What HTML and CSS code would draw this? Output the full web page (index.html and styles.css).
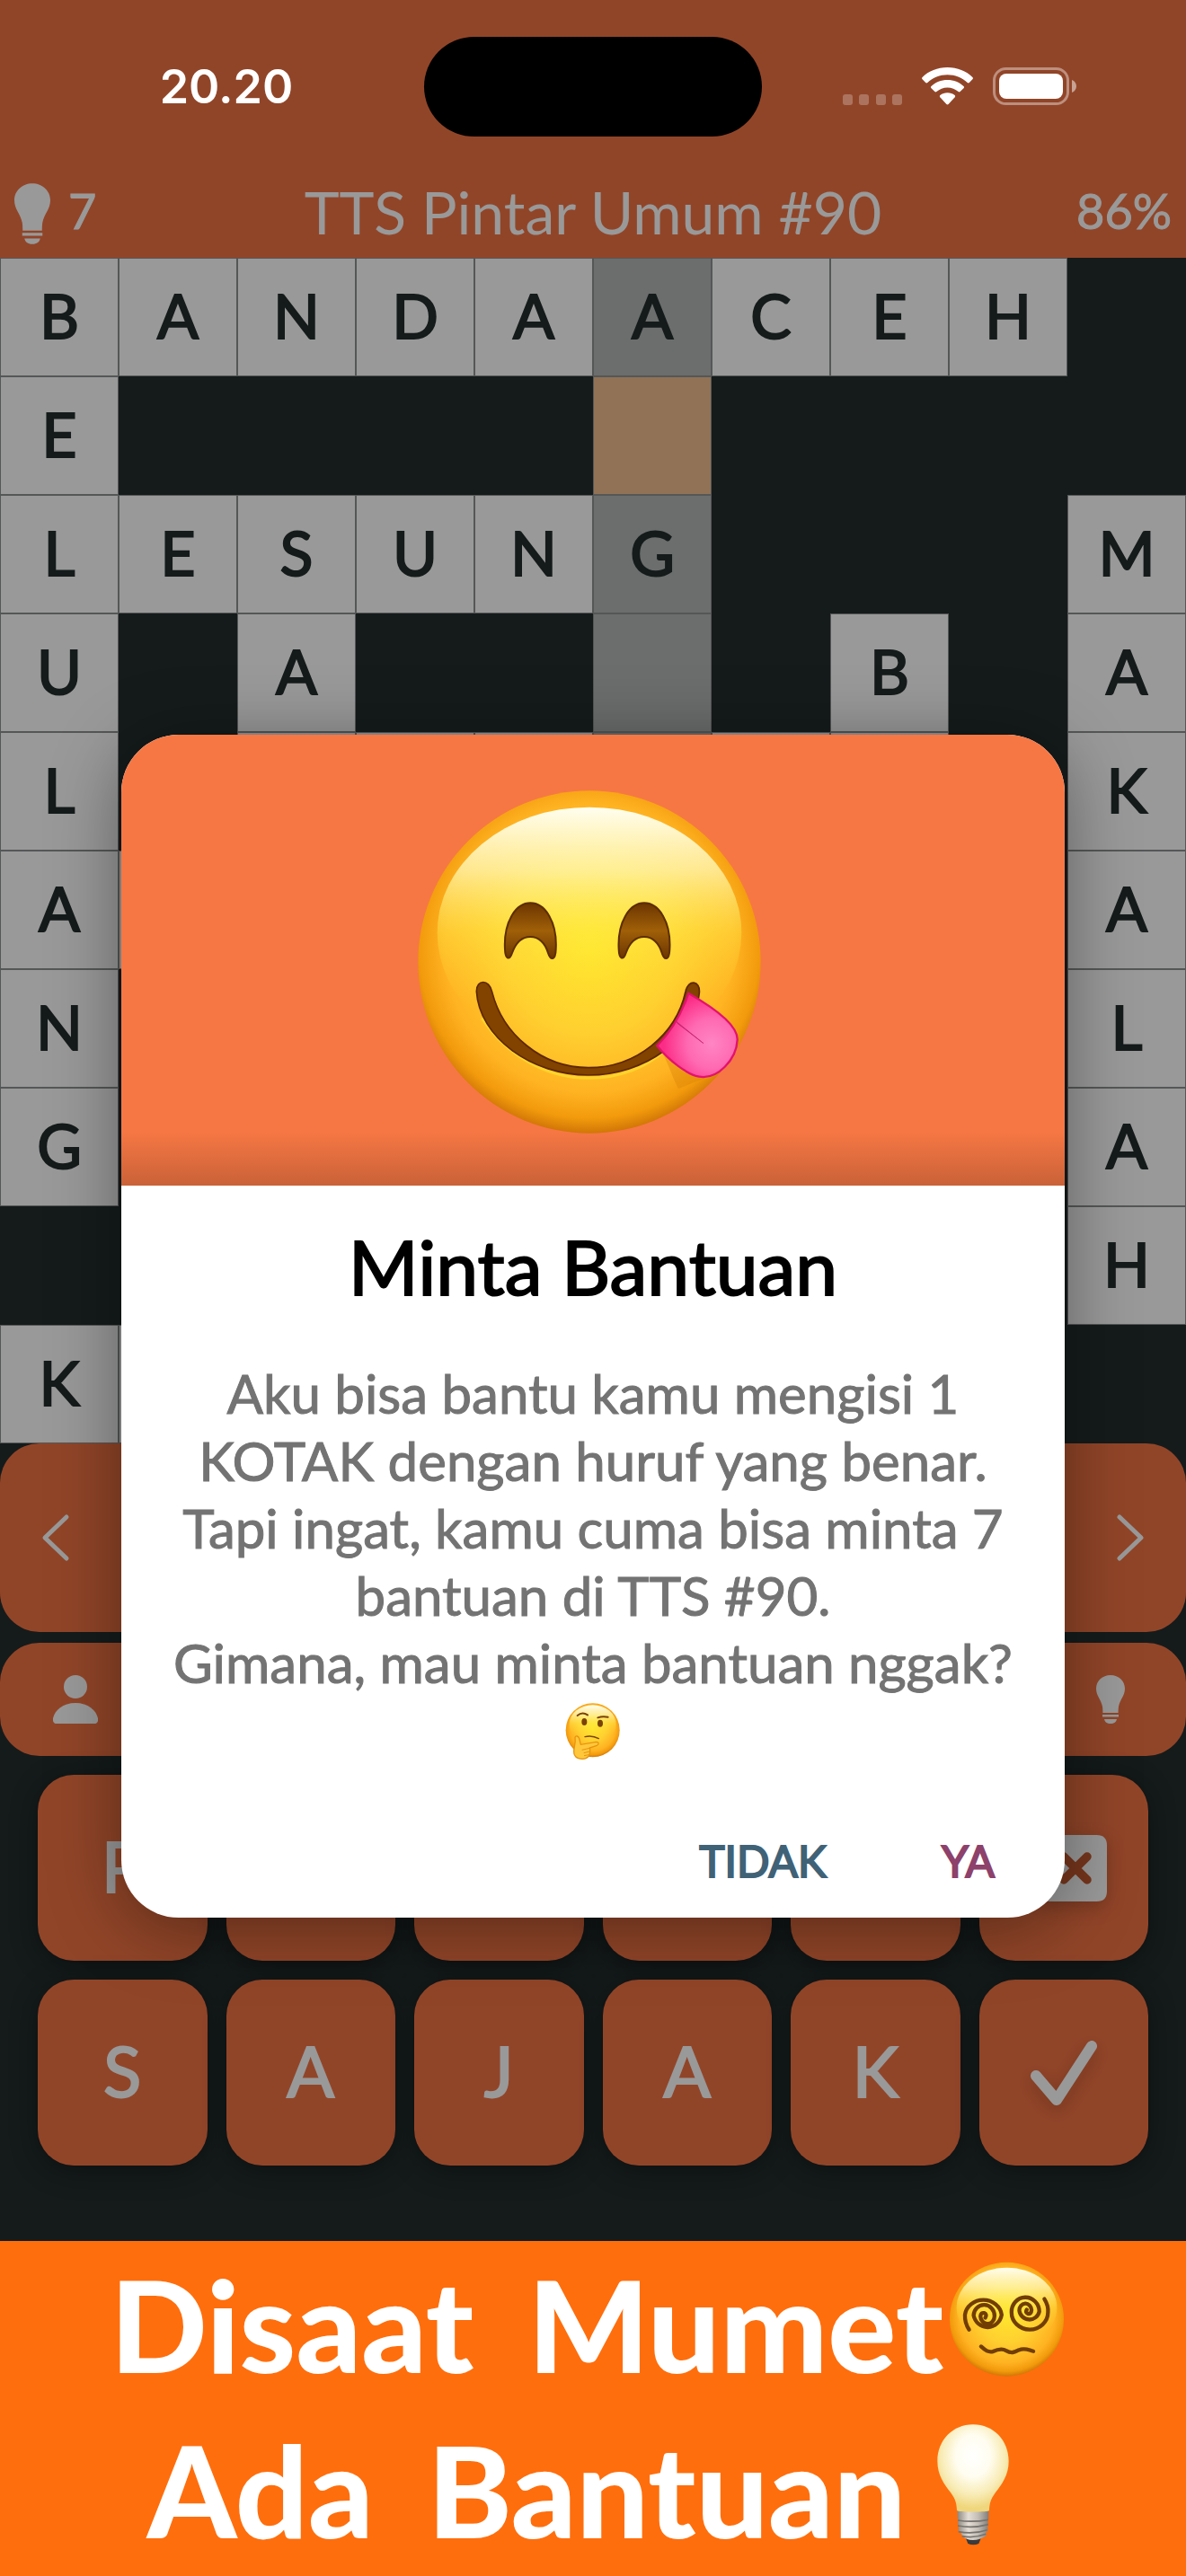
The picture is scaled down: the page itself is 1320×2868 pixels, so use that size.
FILE: index.html
```html
<!DOCTYPE html>
<html lang="id">
<head>
  <meta charset="UTF-8">
  <meta name="viewport" content="width=device-width, initial-scale=1.0">
  <title>TTS Pintar Umum #90</title>
  <link rel="stylesheet" href="styles.css">
</head>
<body>
  <svg class="defs" aria-hidden="true">
    <defs>
      <symbol id="bulb" viewBox="0 0 32 54">
        <path d="M16 0C7 0 0 6.500 0 15c0 8 5.500 12 7 20 .4 2.500.4 7 .4 7h17.200s0-4.500.4-7c1.500-8 7-12 7-20C32 6.500 25 0 16 0z"/>
        <path d="M7 44h18v2.500H7zM9 49h14c-.5 3-3 5-7 5s-6.500-2-7-5z"/>
      </symbol>
      <radialGradient id="face" cx=".5" cy=".46" r=".54">
        <stop offset="0" stop-color="#ffe52c"/>
        <stop offset=".45" stop-color="#ffd030"/>
        <stop offset=".78" stop-color="#ffb322"/>
        <stop offset=".92" stop-color="#f29a0c"/>
        <stop offset="1" stop-color="#d17606"/>
      </radialGradient>
      <linearGradient id="shine" x1="0" y1="0" x2="0" y2="1">
        <stop offset="0" stop-color="#fffef0"/>
        <stop offset=".25" stop-color="#fff9b4" stop-opacity=".75"/>
        <stop offset=".5" stop-color="#fff550" stop-opacity=".35"/>
        <stop offset=".8" stop-color="#ffdc30" stop-opacity="0"/>
      </linearGradient>
      <linearGradient id="eye" x1="0" y1="0" x2="0" y2="1">
        <stop offset="0" stop-color="#6b3500"/>
        <stop offset=".5" stop-color="#a06008"/>
        <stop offset="1" stop-color="#6b3500"/>
      </linearGradient>
      <radialGradient id="tongue" cx=".68" cy=".6" r=".6">
        <stop offset="0" stop-color="#ff85c4"/>
        <stop offset=".5" stop-color="#ff6ab2"/>
        <stop offset="1" stop-color="#fb2c86"/>
      </radialGradient>
      <radialGradient id="glow" cx=".5" cy=".36" r=".6">
        <stop offset="0" stop-color="#fff"/>
        <stop offset=".4" stop-color="#fffdf0"/>
        <stop offset=".75" stop-color="#f8ebb4"/>
        <stop offset="1" stop-color="#efd67c"/>
      </radialGradient>
      <linearGradient id="metal">
        <stop offset="0" stop-color="#8d8880"/>
        <stop offset=".35" stop-color="#e4ded6"/>
        <stop offset=".65" stop-color="#c4beb6"/>
        <stop offset="1" stop-color="#837e78"/>
      </linearGradient>
    </defs>
  </svg>

  <div class="app">
    <header class="header">
      <div class="status-bar">
        <span class="clock">20.20</span>
        <div class="island"></div>
        <div class="status-icons">
          <svg width="66" height="12" viewBox="0 0 66 12" fill="#fff" opacity=".25">
            <rect width="11" height="12" rx="3"/><rect x="18" width="11" height="12" rx="3"/>
            <rect x="37" width="11" height="12" rx="3"/><rect x="55" width="11" height="12" rx="3"/>
          </svg>
          <svg width="57" height="42" viewBox="0 0 57 42" fill="#fff">
            <path d="M28.500 0C17.500 0 7.500 4 .6 11c-.7.7-.7 1.600 0 2.300l3.600 3.700c.6.6 1.500.6 2.100 0 6-5.600 13.700-8.700 22.200-8.700s16.200 3.100 22.200 8.700c.6.6 1.500.6 2.100 0l3.600-3.700c.7-.7.7-1.600 0-2.300C49.500 4 39.500 0 28.500 0z"/>
            <path d="M28.500 14c-7 0-13.300 2.600-18 7-.7.600-.7 1.500 0 2.200l3.900 3.900c.6.600 1.400.6 2 0 3.300-2.900 7.500-4.600 12.100-4.600s8.800 1.700 12.100 4.600c.6.600 1.400.6 2 0l3.900-3.900c.7-.7.700-1.600 0-2.200-4.700-4.400-11-7-18-7z"/>
            <path d="M28.500 28.200c-3.100 0-5.900 1-8.100 2.800-.7.600-.7 1.500-.1 2.200l7.100 7.900c.6.600 1.600.6 2.200 0l7.100-7.900c.6-.7.600-1.600-.1-2.200-2.200-1.800-5-2.800-8.100-2.800z"/>
          </svg>
          <svg width="94" height="42" viewBox="0 0 94 42">
            <rect x="1.500" y="1.500" width="82" height="39" rx="13" fill="none" stroke="#fff" stroke-width="3" opacity=".4"/>
            <rect x="7" y="7" width="71" height="28" rx="8" fill="#fff"/>
            <path d="M88 14c3 1 5 4 5 7s-2 6-5 7z" fill="#fff" opacity=".5"/>
          </svg>
        </div>
      </div>
      <div class="title-bar">
        <div class="hints">
          <svg class="icon" width="40" height="68"><use href="#bulb"/></svg>
          <span>7</span>
        </div>
        <h1>TTS Pintar Umum #90</h1>
        <span class="progress">86%</span>
      </div>
    </header>

    <main>
      <div class="board" id="board"></div>

      <div class="clue-bar">
        <button aria-label="Sebelumnya">
          <svg width="32" height="54" viewBox="0 0 32 54" class="line"><path d="M28 4 4 27l24 23"/></svg>
        </button>
        <button aria-label="Berikutnya">
          <svg width="32" height="54" viewBox="0 0 32 54" class="line"><path d="M4 4l24 23L4 50"/></svg>
        </button>
      </div>

      <div class="tool-bar">
        <button aria-label="Profil">
          <svg class="icon" width="50" height="54" viewBox="0 0 50 54">
            <circle cx="25" cy="13" r="13"/>
            <path d="M25 31C11 31 2 39 0 48c-.6 4 1 6 4 6h42c3 0 4.600-2 4-6-2-9-11-17-25-17z"/>
          </svg>
        </button>
        <button aria-label="Bantuan">
          <svg class="icon" width="32" height="54"><use href="#bulb"/></svg>
        </button>
      </div>

      <div class="keyboard">
        <button class="key letter">P</button>
        <button class="key letter"></button>
        <button class="key letter"></button>
        <button class="key letter"></button>
        <button class="key letter"></button>
        <button class="key" aria-label="Hapus">
          <svg class="icon" width="96" height="76" viewBox="0 0 100 77">
            <path d="M34 0h54q12 0 12 12v53q0 12-12 12H34q-8 0-13-7L2 44q-4-5 0-11L21 7q5-7 13-7z"/>
            <path class="cross" d="M50 25l27 27M77 25 50 52"/>
          </svg>
        </button>
        <button class="key letter">S</button>
        <button class="key letter">A</button>
        <button class="key letter">J</button>
        <button class="key letter">A</button>
        <button class="key letter">K</button>
        <button class="key" aria-label="Kirim">
          <svg class="tick" width="74" height="72" viewBox="0 0 74 72"><path d="M6 39l23 27L68 6"/></svg>
        </button>
      </div>
    </main>

    <div class="backdrop">
      <section class="dialog" role="dialog" aria-labelledby="dialogTitle">
        <div class="dialog-art">
          <svg width="382" height="382" viewBox="76 119 1146 1146">
            <circle cx="649" cy="692" r="572" fill="url(#face)"/>
            <ellipse cx="649" cy="595" rx="508" ry="420" fill="url(#shine)"/>
            <g fill="url(#eye)" stroke="#5d2d00" stroke-width="6">
              <path id="smileEye" d="M367 650c-5-90 35-155 85-155s90 65 85 155c-1 38-18 38-26 12-10-34-32-54-59-54s-49 20-61 54c-8 24-23 24-24-12z"/>
              <use href="#smileEye" x="380"/>
            </g>
            <path d="M290 880c80 120 210 200 356 200 110 0 196-40 252-90" fill="none" stroke="#ffd42c" stroke-width="9"/>
            <path d="M272 790c0-40 42-42 52 2 35 140 165 253 322 253 160 0 292-110 324-254 8-42 50-38 46 4-14 155-182 275-370 275-190 0-365-126-374-280z" fill="#824200" stroke="#5d2600" stroke-width="5"/>
            <path d="M880 975c30 45 40 90 66 140l90-36z" fill="#d67e08" opacity=".35"/>
            <path d="M980 797c60 34 165 100 163 155-3 66-66 134-128 123-36-6-100-52-140-103 45-45 82-108 105-175z" fill="url(#tongue)" stroke="#e3126f" stroke-width="7"/>
            <path d="M938 890l92 74-86-66z" fill="#c2206d" stroke="#c2206d" stroke-width="2"/>
          </svg>
        </div>
        <div class="dialog-body">
          <h2 id="dialogTitle">Minta Bantuan</h2>
          <p>
            Aku bisa bantu kamu mengisi 1<br>
            KOTAK dengan huruf yang benar.<br>
            Tapi ingat, kamu cuma bisa minta 7<br>
            bantuan di TTS #90.<br>
            Gimana, mau minta bantuan nggak?
          </p>
          <svg class="thinking" width="64" height="64" viewBox="24 36 192 192">
            <circle cx="119" cy="130" r="90" fill="url(#face)"/>
            <ellipse cx="119" cy="110" rx="78" ry="64" fill="url(#shine)"/>
            <g fill="none" stroke="#7a4208" stroke-width="6" stroke-linecap="round">
              <path d="M68 81q16-14 34-2M136 88q16-6 34-2"/>
              <path d="M93 152q24-6 46 6" stroke-width="4"/>
            </g>
            <ellipse cx="91" cy="102" rx="9" ry="12" fill="#7a4208"/>
            <ellipse cx="144" cy="107" rx="9" ry="12" fill="#7a4208"/>
            <path d="M60 154c3-8 12-4 14 4l5 20 52-9c9 0 10 9 2 12l-24 8c4 22-4 37-24 37-22 0-30-12-29-26 1-16 7-28 4-46z" fill="#ffc83c" stroke="#e8930e" stroke-width="4"/>
            <path d="M109 190l-26 6M109 201l-20 5M106 212l-16 3" stroke="#e8930e" stroke-width="3"/>
          </svg>
          <div class="actions">
            <button class="no">TIDAK</button>
            <button class="yes">YA</button>
          </div>
        </div>
      </section>
    </div>
  </div>

  <footer class="banner">
    <div class="banner-line">
      <span>Disaat</span>
      <span>Mumet</span>
      <svg width="129" height="129" viewBox="26 26 388 388">
        <circle cx="220" cy="219" r="191" fill="url(#face)"/>
        <ellipse cx="220" cy="180" rx="168" ry="134" fill="url(#shine)"/>
        <g fill="none" stroke-linecap="round" stroke-linejoin="round" stroke="#713d02" stroke-width="13">
          <path d="M94 254Q79 232 80 204A62 57 0 0 1 203 204A48 51 0 0 1 109 206A35 36 0 0 1 179 208A23 25 0 0 1 132 209Q133 196 145 198Q155 203 148 214"/>
          <path d="M346 151Q360 173 358 196A61 58 0 0 1 236 195A46 48 0 0 1 329 193A34 34 0 0 1 262 190A20 22 0 0 1 303 188Q302 203 290 200Q281 196 287 187"/>
          <path d="M134 310C149 324 158 330 174 327C191 319 206 317 218 324C235 334 246 330 260 322C282 313 292 322 309 326"/>
        </g>
      </svg>
    </div>
    <div class="banner-line">
      <span>Ada</span>
      <span>Bantuan</span>
      <svg class="lamp" width="82" height="136" viewBox="48 26 246 408">
        <path d="M146 408h52l-8 20q-18 8-36 0z" fill="#3c3a3a"/>
        <path d="M119 318h104v28l-3 6 2 12-3 6 2 14-6 6v12q-20 14-44 14t-36-14l-5-12-8-8 2-12-4-8 2-12-3-8z" fill="url(#metal)"/>
        <path d="M120 350q50 8 102-2M120 368q50 10 102-4M122 388q50 10 96-6M134 403q40 8 80-7" fill="none" stroke="#77736e" stroke-width="5"/>
        <path d="M171 30C102 30 52 84 52 152c0 48 22 76 44 105 18 24 20 40 21 60 0 6 108 6 108 0 1-20 3-36 21-60 22-29 44-57 44-105C290 84 240 30 171 30z" fill="url(#glow)"/>
      </svg>
    </div>
  </footer>

  <script src="script.js"></script>
</body>
</html>
```
FILE: styles.css
```css
* {
  box-sizing: border-box;
}

body {
  margin: 0;
  min-height: 100vh;
  display: flex;
  flex-direction: column;
  font-family: Lato, "Open Sans", sans-serif;
  background: #232d2d;
}

h1, h2, p {
  margin: 0;
  font-weight: 400;
}

button {
  border: none;
  background: none;
  padding: 0;
  font-family: inherit;
  color: inherit;
  cursor: pointer;
}

svg {
  display: block;
  flex-shrink: 0;
}

.defs {
  position: absolute;
  width: 0;
  height: 0;
}

.app {
  position: relative;
  flex: 1;
  background: #232d2d;
  color: #fff;
}

.icon {
  fill: #fff;
}

/* header */
.header {
  background: #f27344;
}

.status-bar {
  position: relative;
  z-index: 3; /* stays bright over the backdrop */
  display: grid;
  grid-template-columns: 1fr 376px 1fr;
  align-items: center;
  height: 192px;
}

.clock {
  padding-left: 32px;
  text-align: center;
  font-family: Inter, sans-serif;
  font-weight: 600;
  font-size: 52px;
}

.island {
  height: 111px;
  border-radius: 56px;
  background: #000;
}

.status-icons {
  display: flex;
  justify-content: flex-end;
  align-items: flex-end;
  gap: 22px;
  padding-right: 121px;
}

.title-bar {
  display: grid;
  grid-template-columns: 1fr auto 1fr;
  align-items: center;
  height: 95px;
  padding: 0 16px 4px;
  font-size: 54px;
  line-height: 64px;
}

.title-bar h1 {
  padding-bottom: 4px;
  font-size: 66px;
}

.title-bar span {
  padding-bottom: 6px;
  -webkit-text-stroke: 1px;
}

.hints {
  display: flex;
  align-items: center;
  gap: 20px;
}

.progress {
  text-align: right;
}

/* crossword */
.board {
  display: grid;
  grid-template-columns: repeat(10, 1fr);
}

.cell {
  display: flex;
  align-items: center;
  justify-content: center;
  aspect-ratio: 1;
  padding-bottom: 6px;
  font-size: 68px;
  -webkit-text-stroke: 2px;
  color: #232d2d;
}

.cell.open {
  background: #fff;
  border: 1px solid #8e9192;
}

.cell.word {
  background: #b2b7b6;
}

.cell.active {
  background: #f2be8f;
}

.clue-bar,
.tool-bar {
  display: flex;
  justify-content: space-between;
  align-items: center;
  margin-bottom: 12px;
  border-radius: 44px;
  background: #f27344;
}

.clue-bar {
  height: 210px;
  padding: 0 46px;
}

.tool-bar {
  height: 126px;
  padding: 0 68px 0 59px;
}

.line {
  fill: none;
  stroke: #fff;
  stroke-width: 5;
  stroke-linecap: round;
  stroke-linejoin: round;
}

.keyboard {
  display: grid;
  grid-template-columns: repeat(6, 1fr);
  gap: 21px;
  padding: 9px 42px 83px;
}

.key {
  display: flex;
  align-items: center;
  justify-content: center;
  height: 207px;
  border-radius: 40px;
  background: #f27344;
  box-shadow: 0 6px 30px rgba(0, 0, 0, 0.4);
}

.key.letter {
  padding-bottom: 6px;
  font-size: 78px;
  -webkit-text-stroke: 2px;
}

.key svg {
  filter: drop-shadow(0 6px 10px rgba(0, 0, 0, 0.2));
}

.cross {
  stroke: #c65a30;
  stroke-width: 10;
  stroke-linecap: round;
}

.tick {
  fill: none;
  stroke: #fff;
  stroke-width: 12;
  stroke-linecap: round;
  stroke-linejoin: round;
}

/* dialog */
.backdrop {
  position: absolute;
  inset: 0;
  z-index: 2;
  padding: 818px 135px 0;
  background: rgba(0, 0, 0, 0.4);
}

.dialog {
  border-radius: 64px;
  overflow: hidden;
  background: #fff;
  box-shadow: 0 10px 80px rgba(0, 0, 0, 0.4);
}

.dialog-art {
  display: flex;
  justify-content: center;
  padding: 62px 8px 58px 0;
  background: linear-gradient(transparent 88%, rgba(0, 0, 0, 0.18)) #f67744;
}

.dialog-body {
  display: flex;
  flex-direction: column;
  align-items: center;
  padding: 40px 24px 28px;
  text-align: center;
}

.dialog-body h2 {
  margin-bottom: 54px;
  font-size: 84px;
  line-height: 100px;
  color: #000;
  -webkit-text-stroke: 2px;
}

.dialog-body p {
  font-size: 60px;
  line-height: 75px;
  color: #737373;
  white-space: nowrap;
  -webkit-text-stroke: 1px;
}

.thinking {
  margin: 6px 0;
}

.actions {
  align-self: flex-end;
  display: flex;
  gap: 128px;
  padding: 72px 54px 0 0;
}

.actions button {
  font-size: 48px;
  line-height: 70px;
  -webkit-text-stroke: 2px;
}

.actions .no {
  color: #406277;
}

.actions .yes {
  color: #8d416b;
}

/* promo banner */
.banner {
  padding: 0 0 5px;
  background: #ff6e0d;
  color: #fff;
  font-size: 142px;
  font-weight: 900;
  line-height: 184px;
}

.banner-line {
  display: flex;
  justify-content: center;
  align-items: center;
}

.banner-line span + span {
  margin-left: 60px;
}

.banner-line svg {
  margin: 0 12px 10px 6px;
}

.banner-line .lamp {
  margin-left: 34px;
  margin-right: 32px;
}
```
FILE: script.js
```js
// "." = blocked, "_" = empty, "-" = empty in the selected word, "*" = cursor
const rows = [
  'BANDAACEH.',
  'E....*....',
  'LESUNG...M',
  'U.A..-.B.A',
  'L.___-__.K',
  'A_.......A',
  'N........L',
  'G........A',
  '.........H',
  'K_........'
];
const selectedColumn = 5;
const board = document.getElementById('board');

rows.forEach((row, y) => {
  [...row].forEach((char, x) => {
    const cell = document.createElement('div');
    cell.className = 'cell';
    if (char !== '.') {
      cell.classList.add('open');
      if (char === '*') cell.classList.add('active');
      else if (x === selectedColumn && y < 5) cell.classList.add('word');
      if (/[A-Z]/.test(char)) cell.textContent = char;
    }
    board.appendChild(cell);
  });
});
```
